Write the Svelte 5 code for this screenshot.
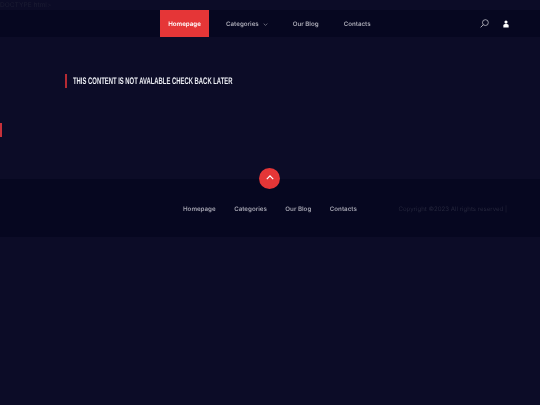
<script>
  const links = ['Homepage', 'Categories', 'Our Blog', 'Contacts'];
</script>

<div class="doctype">DOCTYPE html&gt;</div>

<header class="topbar">
  <nav class="menu">
    {#each links as link, i}
      <a href="#top" class:active={i === 0}>
        {link}
        {#if link === 'Categories'}
          <svg class="chev" viewBox="0 0 8 5" width="5" height="3"><path d="M1 1l3 3 3-3" fill="none" stroke="currentColor" stroke-width="1"/></svg>
        {/if}
      </a>
    {/each}
  </nav>
  <div class="tools">
    <svg viewBox="0 0 12 12" width="9" height="9"><circle cx="7.2" cy="4.8" r="3.9" fill="none" stroke="#c9c9d2" stroke-width="1"/><path d="M4.4 7.6L.8 11.2" stroke="#c9c9d2" stroke-width="1.1"/></svg>
    <svg viewBox="0 0 10 12" width="6" height="8"><circle cx="5" cy="2.8" r="2.6" fill="#fff"/><path d="M.6 12V8.4C.6 6.6 2 5.8 5 5.8s4.4.8 4.4 2.6V12z" fill="#fff"/></svg>
  </div>
</header>

<main class="content">
  <h1><span>THIS CONTENT IS NOT AVALABLE CHECK BACK LATER</span></h1>
</main>

<div class="side-tab"></div>

<footer class="bottom">
  <button class="to-top" aria-label="Back to top">
    <svg viewBox="0 0 10 6" width="8" height="5"><path d="M1 5l4-4 4 4" fill="none" stroke="#fff" stroke-width="1.5"/></svg>
  </button>
  <nav class="foot-menu">
    {#each links as link}
      <a href="#top">{link}</a>
    {/each}
  </nav>
  <p class="copy">Copyright ©2023 All rights reserved |</p>
</footer>

<style>
  :global(body) {
    margin: 0;
    background: #0c0c27;
    font-family: Inter, "Noto Sans", sans-serif;
    text-rendering: geometricPrecision;
  }

  .doctype {
    height: 10px;
    line-height: 10px;
    font-size: 6.6px;
    color: #1c1d33;
    will-change: transform;
  }

  .topbar {
    height: 27px;
    background: #060720;
    display: flex;
    justify-content: space-between;
    padding-left: 160px;
    padding-right: 31px;
  }

  .menu {
    display: flex;
    align-items: stretch;
    padding-bottom: 0;
    will-change: transform;
  }

  .menu a {
    display: flex;
    align-items: center;
    gap: 3px;
    margin-right: 25px;
    padding-top: 1px;
    box-sizing: border-box;
    font-size: 6.2px;
    font-weight: 600;
    color: #a8a8b4;
    text-decoration: none;
    white-space: nowrap;
  }

  .menu a.active {
    width: 49px;
    justify-content: center;
    background: #e53637;
    color: #fff;
    margin-right: 17px;
  }

  .chev {
    margin-left: 1px;
  }

  .tools {
    display: flex;
    align-items: center;
    gap: 14px;
  }

  .content {
    height: 142px;
    padding: 37px 0 0 65px;
    box-sizing: border-box;
    will-change: transform;
  }

  h1 {
    margin: 0;
    height: 14px;
    line-height: 15px;
    border-left: 2px solid #b52a33;
    padding-left: 6px;
    font-family: "Liberation Sans", sans-serif;
    font-size: 9.5px;
    font-weight: 700;
    color: #eceef4;
    white-space: nowrap;
  }

  /* no condensed family installed, so squeeze it */
  h1 span {
    display: inline-block;
    transform: scaleX(0.62);
    transform-origin: left center;
  }

  .side-tab {
    position: absolute;
    left: 0;
    top: 123px;
    width: 2px;
    height: 14px;
    background: #c7313a;
  }

  .bottom {
    position: relative;
    height: 58px;
    background: #060720;
    display: flex;
    align-items: center;
    padding: 3px 33px 0 183px;
    box-sizing: border-box;
    justify-content: space-between;
    will-change: transform;
  }

  .to-top {
    position: absolute;
    left: 259px;
    top: -11px;
    width: 21px;
    height: 21px;
    padding: 0 0 3px;
    border: none;
    border-radius: 50%;
    background: #e53637;
    display: flex;
    align-items: center;
    justify-content: center;
  }

  .foot-menu {
    display: flex;
    gap: 18.5px;
  }

  .foot-menu a {
    font-size: 6.2px;
    font-weight: 600;
    color: #a0a0ad;
    text-decoration: none;
    white-space: nowrap;
  }

  .copy {
    margin: 0;
    font-size: 6.1px;
    color: #25263c;
    white-space: nowrap;
  }
</style>
